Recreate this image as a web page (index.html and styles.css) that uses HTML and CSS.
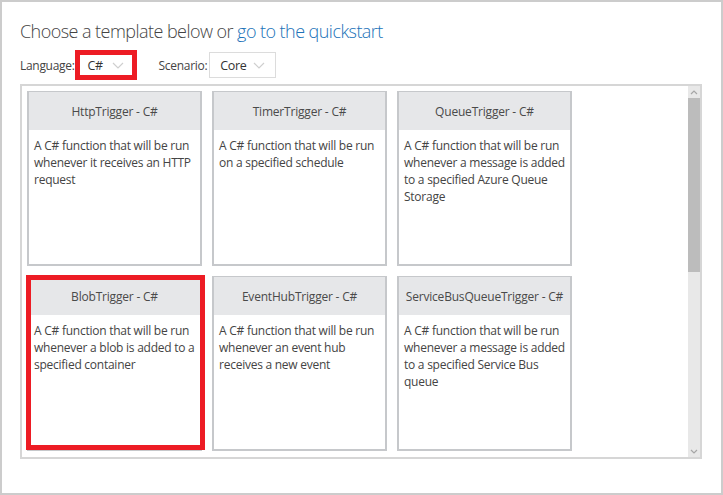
FILE: index.html
```html
<!DOCTYPE html>
<html>
<head>
<meta charset="utf-8">
<link rel="stylesheet" href="styles.css">
</head>
<body>
<div class="frame">
  <h1 class="title">Choose a template below or <a class="link" href="#">go to the quickstart</a></h1>
  <div class="filters">
    <span class="label">Language:</span>
    <div class="select select-lang highlight">
      <span class="value">C#</span>
      <svg class="chev" width="12" height="7" viewBox="0 0 12 7"><polyline points="1,1 6,6 11,1" fill="none" stroke="#cfcfcf" stroke-width="1.2"/></svg>
    </div>
    <span class="label label-scenario">Scenario:</span>
    <div class="select select-scenario">
      <span class="value">Core</span>
      <svg class="chev" width="12" height="7" viewBox="0 0 12 7"><polyline points="1,1 6,6 11,1" fill="none" stroke="#cfcfcf" stroke-width="1.2"/></svg>
    </div>
  </div>
  <div class="list">
    <div class="grid">
      <div class="card">
        <div class="card-head">HttpTrigger - C#</div>
        <div class="card-body">A C# function that will be run whenever it receives an HTTP request</div>
      </div>
      <div class="card">
        <div class="card-head">TimerTrigger - C#</div>
        <div class="card-body">A C# function that will be run on a specified schedule</div>
      </div>
      <div class="card">
        <div class="card-head">QueueTrigger - C#</div>
        <div class="card-body">A C# function that will be run whenever a message is added to a specified Azure Queue Storage</div>
      </div>
      <div class="card card-marked">
        <div class="card-head">BlobTrigger - C#</div>
        <div class="card-body">A C# function that will be run whenever a blob is added to a specified container</div>
      </div>
      <div class="card">
        <div class="card-head">EventHubTrigger - C#</div>
        <div class="card-body">A C# function that will be run whenever an event hub receives a new event</div>
      </div>
      <div class="card">
        <div class="card-head">ServiceBusQueueTrigger - C#</div>
        <div class="card-body">A C# function that will be run whenever a message is added to a specified Service Bus queue</div>
      </div>
    </div>
    <div class="scrollbar">
      <div class="sb-btn">
        <svg width="8" height="5" viewBox="0 0 8 5"><polyline points="1,4 4,1 7,4" fill="none" stroke="#a6a6a6" stroke-width="1.2"/></svg>
      </div>
      <div class="sb-thumb"></div>
      <div class="sb-track"></div>
      <div class="sb-btn">
        <svg width="8" height="5" viewBox="0 0 8 5"><polyline points="1,1 4,4 7,1" fill="none" stroke="#a6a6a6" stroke-width="1.2"/></svg>
      </div>
    </div>
  </div>
</div>
</body>
</html>
```
FILE: styles.css
```css
* { box-sizing: border-box; }
html, body { margin: 0; padding: 0; background: #fff; }
body { font-family: "Open Sans", "Noto Sans", sans-serif; color: #444; }

.frame {
  width: 723px;
  height: 495px;
  border: 2px solid #cccccc;
  padding: 17px 19px 0 18px;
  overflow: hidden;
}

.title {
  margin: 0;
  font-size: 18px;
  line-height: 24px;
  font-weight: 300;
  color: #444;
  letter-spacing: -0.55px;
}
.link { color: #2072b8; text-decoration: none; }

.filters {
  display: flex;
  align-items: center;
  height: 30px;
  margin-top: 7px;
  font-size: 12px;
  letter-spacing: -0.3px;
}
.label { color: #444; }
.label-scenario { margin-left: 24px; }

.select {
  position: relative;
  display: flex;
  align-items: center;
  justify-content: space-between;
  height: 26px;
  border: 1px solid #dcdcdc;
  padding: 0 10px 0 10px;
  margin-left: 2px;
  font-size: 12.5px;
  color: #333;
}
.select-lang { width: 58px; }
.select-scenario { width: 67px; }
.chev { display: block; }

.highlight::after {
  content: "";
  position: absolute;
  left: -3px; right: -3px; top: -3px; bottom: -3px;
  border: 5px solid #ed1c24;
}

.list {
  display: flex;
  height: 375px;
  margin-top: 4px;
  border: 2px solid #d6d6d6;
}

.grid {
  flex: 1;
  display: grid;
  grid-template-columns: repeat(3, 175px);
  grid-auto-rows: 175px;
  gap: 10px;
  padding: 5px;
  overflow: hidden;
  align-content: start;
}

.card {
  position: relative;
  border: 2px solid #c6c8cb;
  background: #fff;
}
.card-head {
  height: 38px;
  background: #e6e7e9;
  display: flex;
  align-items: center;
  justify-content: center;
  font-size: 12px;
  letter-spacing: -0.2px;
  color: #4a4a4a;
  margin-top: -1px;
}
.card-body {
  padding: 7px 2px 5px 5px;
  font-size: 12px;
  line-height: 17px;
  letter-spacing: -0.25px;
  color: #444;
}

.card-marked::after {
  content: "";
  position: absolute;
  left: -3px; right: -5px; top: -3px; bottom: -1px;
  border: 5px solid #ed1c24;
}

.scrollbar {
  width: 12px;
  display: flex;
  flex-direction: column;
  background: #e8e8e8;
}
.sb-btn {
  height: 12px;
  display: flex;
  align-items: center;
  justify-content: center;
  background: #e8e8e8;
}
.sb-thumb { height: 174px; background: #bcbcbc; }
.sb-track { flex: 1; }
```
